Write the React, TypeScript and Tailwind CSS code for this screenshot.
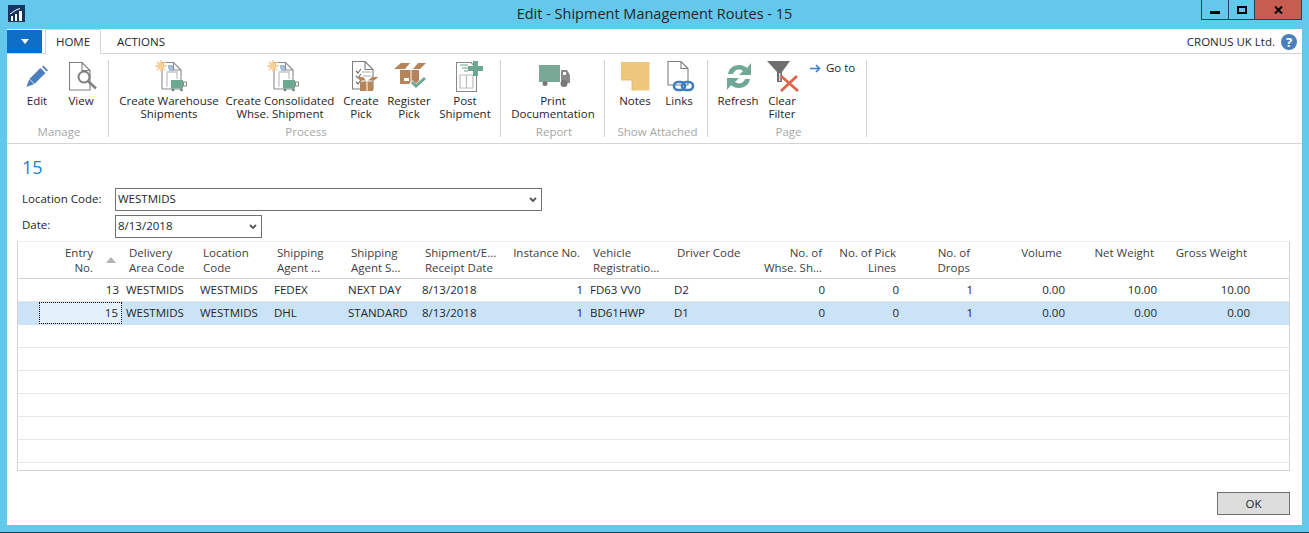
import React from "react";

// Ribbon icons
const Doc = () => (
  <path d="M0.500 0.500H13L21 8.500V28H0.500Z M13 0.500V8.500H21" fill="#fff" stroke="#7f7f7f" strokeWidth="1.100" />
);

const EditIcon = () => (
  <svg width="22" height="23" viewBox="0 0 26 26">
    <path d="M0.500 25.500L4 16L17 3L23 9L10 22Z" fill="#4a7fbb" />
    <path d="M19 1.500L20.500 0L26 5.500L24.500 7Z" fill="#4a7fbb" />
    <path d="M4 16L10 22" stroke="#fff" strokeWidth="1" />
  </svg>
);

const ViewIcon = () => (
  <svg width="28" height="29" viewBox="0 0 28 29">
    <Doc />
    <circle cx="15" cy="15" r="5.500" fill="#fff" stroke="#7f7f7f" strokeWidth="2" />
    <path d="M19 19L27 26.500" stroke="#7f7f7f" strokeWidth="2.500" />
  </svg>
);

const WarehouseIcon = () => (
  <svg width="32" height="32" viewBox="0 0 32 32">
    <path d="M7 2.500V29H26V10L18.500 2.500Z" fill="#fff" stroke="#8a8a8a" strokeWidth="1.100" />
    <path d="M18.500 2.500V10H26" fill="none" stroke="#8a8a8a" strokeWidth="1.100" />
    <path d="M12 12V27M12 12H22V19" fill="none" stroke="#c4c4c4" strokeWidth="1.300" />
    <path d="M13 6H18M13 8H18M14 10H18" stroke="#4a7fbb" strokeWidth="1" />
    <g stroke="#f5cf96" strokeWidth="1.500">
      <circle cx="6" cy="6" r="2.800" fill="#fbe6c2" />
      <path d="M6 0V12M0 6H12M1.800 1.800L10.200 10.200M10.200 1.800L1.800 10.200" />
    </g>
    <rect x="16" y="20" width="12" height="8.500" fill="#6ba88f" />
    <rect x="28.500" y="22" width="3" height="4" fill="none" stroke="#8a8a8a" />
    <circle cx="18" cy="30" r="1.300" fill="#777" />
    <circle cx="26.500" cy="30" r="1.300" fill="#777" />
  </svg>
);

const PickIcon = () => (
  <svg width="27" height="30" viewBox="0 0 27 30">
    <Doc />
    <path d="M4 10L6 12L9 8M4 15L6 17L9 13M4 21L6 23L9 19" fill="none" stroke="#666" strokeWidth="1.100" />
    <path d="M10 11H19M11 15H19" stroke="#aaa" strokeWidth="1" />
    <path d="M8 19.500H14L11 16H5ZM16 19.500H22L26.500 16H20Z" fill="#b5845a" />
    <rect x="8" y="20.500" width="13" height="9.500" fill="#b5845a" />
    <path d="M15 20.500V30" stroke="#fff" strokeWidth="1" />
  </svg>
);

const RegisterIcon = () => (
  <svg width="33" height="26" viewBox="0 0 33 26">
    <path d="M0 6H11L16 0H7ZM19 6H26L32 0H24Z" fill="#b5845a" />
    <rect x="6" y="7" width="19" height="14" fill="#b5845a" />
    <path d="M17 7V21" stroke="#fff" strokeWidth="1" />
    <rect x="10" y="15" width="5" height="3" fill="#fff" />
    <path d="M17 19L22 24L32 14" fill="none" stroke="#fff" strokeWidth="5" />
    <path d="M18 19L22 23L31 15" fill="none" stroke="#6ba88f" strokeWidth="3" />
  </svg>
);

const PostIcon = () => (
  <svg width="27" height="31" viewBox="0 0 27 31">
    <path d="M0.500 1.500H15L20.500 7V30.500H0.500Z" fill="#fff" stroke="#8a8a8a" strokeWidth="1.100" />
    <path d="M4 14H17V27H4ZM10.500 14V27" fill="none" stroke="#bdbdbd" strokeWidth="1.200" />
    <path d="M4 4H12M6 7H12M8 10H12" stroke="#6ba88f" strokeWidth="1" />
    <path d="M17 0H22V5H27V10H22V15H17V10H12V5H17Z" fill="#6ba88f" />
  </svg>
);

const TruckIcon = () => (
  <svg width="32" height="22" viewBox="0 0 32 22">
    <rect x="0" y="0" width="21" height="17" fill="#7aa897" />
    <path d="M22 5H28L31 10V18H22Z" fill="#8a8a8a" />
    <rect x="24" y="7" width="3" height="3" fill="#fff" />
    <circle cx="6" cy="18.500" r="2.500" fill="#777" />
    <circle cx="25" cy="18.500" r="3.500" fill="#777" />
  </svg>
);

const NotesIcon = () => (
  <svg width="29" height="29" viewBox="0 0 29 29">
    <path d="M0 0H28.500V28.500H11L0 17.500Z" fill="#eec77d" />
    <path d="M0.500 18H11V28.500" fill="#fff" stroke="#d9b26a" strokeWidth="0.800" />
  </svg>
);

const LinksIcon = () => (
  <svg width="28" height="31" viewBox="0 0 28 31">
    <path d="M1 0.500H14L21 7.500V24H1V0.500Z M14 0.500V7.500H21" fill="#fff" stroke="#7f7f7f" strokeWidth="1.100" />
    <rect x="7" y="21" width="11" height="8" rx="4" fill="none" stroke="#3f7fc0" strokeWidth="2.600" />
    <rect x="15" y="21" width="11" height="8" rx="4" fill="none" stroke="#3f7fc0" strokeWidth="2.600" />
  </svg>
);

const RefreshIcon = () => (
  <svg width="28" height="29" viewBox="0 0 28 29">
    <path d="M3 12C4 6 9 3 14 3C18 3 21 5 22 6L26 1V13H14L18 9C14 6 9 8 8 12Z" fill="#70a898" />
    <path d="M25 17C24 23 19 26 14 26C10 26 7 24 6 23L2 28V16H14L10 20C14 23 19 21 20 17Z" fill="#70a898" />
  </svg>
);

const ClearFilterIcon = () => (
  <svg width="32" height="31" viewBox="0 0 32 31">
    <path d="M0 0H23L15 11V21H10V11Z" fill="#6f6f6f" />
    <path d="M12 12H13.500V20H12Z" fill="#d8d8d8" />
    <path d="M14 30L30 15M14 15L31 30" stroke="#e0644c" strokeWidth="2.800" />
  </svg>
);

const Chevron = () => (
  <svg width="8" height="6" viewBox="0 0 8 6" className="shrink-0">
    <path d="M1 1L4 4L7 1" fill="none" stroke="#555" strokeWidth="1.800" />
  </svg>
);

interface RibbonButtonProps {
  icon: React.ReactNode;
  lines: string[];
  width: string;
  iconShift?: string;
}

const RibbonButton: React.FC<RibbonButtonProps> = ({ icon, lines, width, iconShift = "" }) => (
  <div className={`${width} flex flex-col items-center`}>
    <div className={`h-[40px] shrink-0 pt-[4px] flex items-center justify-center ${iconShift}`}>{icon}</div>
    <div className="text-center leading-[13px] whitespace-nowrap">
      {lines.map((line) => (
        <div key={line}>{line}</div>
      ))}
    </div>
  </div>
);

interface RibbonGroupProps {
  label: string;
  width: string;
  children: React.ReactNode;
}

const RibbonGroup: React.FC<RibbonGroupProps> = ({ label, width, children }) => (
  <div className={`${width} flex flex-col h-[77px] mt-[6px] border-r border-[#d4d4d4]`}>
    <div className="flex shrink-0 h-[66px] pl-1 -mt-[6px]">{children}</div>
    <div className="mt-[5px] pl-[3px] text-center leading-[14px] whitespace-nowrap text-[#a6a6a6]">{label}</div>
  </div>
);

const gridCols =
  "grid grid-cols-[21px_83px_74px_74px_74px_74px_89px_79px_84px_79px_79px_74px_74px_92px_92px_93px_1fr]";

interface Column {
  lines: string[];
  right?: boolean;
}

const columns: Column[] = [
  { lines: ["Entry", "No."], right: true },
  { lines: ["Delivery", "Area Code"] },
  { lines: ["Location", "Code"] },
  { lines: ["Shipping", "Agent ..."] },
  { lines: ["Shipping", "Agent S..."] },
  { lines: ["Shipment/E...", "Receipt Date"] },
  { lines: ["Instance No."], right: true },
  { lines: ["Vehicle", "Registratio..."] },
  { lines: ["Driver Code"] },
  { lines: ["No. of", "Whse. Sh..."], right: true },
  { lines: ["No. of Pick", "Lines"], right: true },
  { lines: ["No. of", "Drops"], right: true },
  { lines: ["Volume"], right: true },
  { lines: ["Net Weight"], right: true },
  { lines: ["Gross Weight"], right: true },
];

const rows = [
  ["13", "WESTMIDS", "WESTMIDS", "FEDEX", "NEXT DAY", "8/13/2018", "1", "FD63 VV0", "D2", "0", "0", "1", "0.00", "10.00", "10.00"],
  ["15", "WESTMIDS", "WESTMIDS", "DHL", "STANDARD", "8/13/2018", "1", "BD61HWP", "D1", "0", "0", "1", "0.00", "0.00", "0.00"],
];

export default function App() {
  return (
    <div
      className="w-[1309px] h-[533px] overflow-hidden bg-[#63c8eb] border-b border-[#1f3f4f] text-[11.5px] text-[#262626] flex flex-col"
      style={{ fontFamily: '"Open Sans", "Noto Sans", sans-serif' }}
    >
      {/* title bar */}
      <div className="h-[29px] shrink-0 relative flex items-start">
        <div className="ml-[8px] mt-[5px] w-[17px] h-[17px] bg-[#12365f] flex items-end justify-center">
          <svg width="15" height="15" viewBox="0 0 15 15">
            <path d="M2 14V9H4V14ZM6 14V7H8V14ZM10 14V4H13V14Z" fill="#fff" />
            <path d="M1 7L7 3L11 1.500" fill="none" stroke="#fff" strokeWidth="1" />
          </svg>
        </div>
        <div className="absolute left-0 right-0 top-[4px] text-center text-[14.5px] leading-[20px]">
          Edit - Shipment Management Routes - 15
        </div>
        <div className="ml-auto mr-[7px] flex h-[20px] border-x border-b border-[#1f4658] relative">
          <div className="w-[27px] border-r border-[#1f4658] flex items-center justify-center">
            <div className="w-[10px] h-[3px] bg-black mt-[5px]" />
          </div>
          <div className="w-[26px] border-r border-[#1f4658] flex items-center justify-center">
            <div className="w-[10px] h-[8px] border-2 border-black" />
          </div>
          <div className="w-[46px] bg-[#c65d50] flex items-center justify-center">
            <svg width="9" height="8" viewBox="0 0 9 8">
              <path d="M1 0.500L8 7.500M8 0.500L1 7.500" stroke="#000" strokeWidth="2" />
            </svg>
          </div>
        </div>
      </div>

      {/* window body */}
      <div className="mx-[7px] h-[496px] bg-white flex flex-col">
        {/* tabs */}
        <div className="h-[25px] shrink-0 flex items-end border-b border-[#d4d4d4] pr-[5px]">
          <div className="w-[35px] h-[23px] bg-[#0f6fc6] flex items-center justify-center self-start mt-[1px]">
            <svg width="8" height="5" viewBox="0 0 8 5">
              <path d="M0 0H8L4 5Z" fill="#fff" />
            </svg>
          </div>
          <div className="ml-[3px] w-[56px] h-[25px] -mb-px bg-white border border-b-0 border-[#d4d4d4] flex items-center justify-center">
            HOME
          </div>
          <div className="ml-[16px] h-[23px] flex items-center">ACTIONS</div>
          <div className="ml-auto h-[23px] flex items-center gap-[6px]">
            <span>CRONUS UK Ltd.</span>
            <span className="w-[16px] h-[16px] rounded-full bg-[#4a7fbb] text-white text-[13px] leading-[16px] font-bold text-center">
              ?
            </span>
          </div>
        </div>

        {/* ribbon */}
        <div className="h-[90px] shrink-0 flex border-b border-[#d4d4d4]">
          <RibbonGroup label="Manage" width="w-[102px]">
            <div className="w-[4px]" />
            <RibbonButton width="w-[44px]" icon={<EditIcon />} lines={["Edit"]} />
            <RibbonButton width="w-[44px]" iconShift="pl-[4px]" icon={<ViewIcon />} lines={["View"]} />
          </RibbonGroup>
          <RibbonGroup label="Process" width="w-[392px]">
            <RibbonButton width="w-[112px]" iconShift="pl-[4px]" icon={<WarehouseIcon />} lines={["Create Warehouse", "Shipments"]} />
            <RibbonButton width="w-[110px]" iconShift="pl-[5px]" icon={<WarehouseIcon />} lines={["Create Consolidated", "Whse. Shipment"]} />
            <RibbonButton width="w-[52px]" iconShift="pl-[8px]" icon={<PickIcon />} lines={["Create", "Pick"]} />
            <RibbonButton width="w-[44px]" iconShift="pl-[2px]" icon={<RegisterIcon />} lines={["Register", "Pick"]} />
            <RibbonButton width="w-[68px]" iconShift="pl-[8px]" icon={<PostIcon />} lines={["Post", "Shipment"]} />
          </RibbonGroup>
          <RibbonGroup label="Report" width="w-[104px]">
            <RibbonButton width="w-[96px]" iconShift="pl-[4px]" icon={<TruckIcon />} lines={["Print", "Documentation"]} />
          </RibbonGroup>
          <RibbonGroup label="Show Attached" width="w-[103px]">
            <RibbonButton width="w-[52px]" icon={<NotesIcon />} lines={["Notes"]} />
            <RibbonButton width="w-[36px]" iconShift="pl-[4px]" icon={<LinksIcon />} lines={["Links"]} />
          </RibbonGroup>
          <RibbonGroup label="Page" width="w-[159px]">
            <RibbonButton width="w-[52px]" iconShift="pl-[2px]" icon={<RefreshIcon />} lines={["Refresh"]} />
            <RibbonButton width="w-[36px]" iconShift="pl-[2px]" icon={<ClearFilterIcon />} lines={["Clear", "Filter"]} />
            <div className="ml-[10px] mt-[7px] flex items-start gap-[5px] leading-[14px]">
              <svg width="11" height="9" viewBox="0 0 11 9" className="mt-[3px]">
                <path d="M0 4.500H9M6 1L9.500 4.500L6 8" fill="none" stroke="#3f7fc0" strokeWidth="1.600" />
              </svg>
              <span>Go to</span>
            </div>
          </RibbonGroup>
        </div>

        {/* form */}
        <div className="px-[15px] pt-[12px] text-[18px] leading-[22px] text-[#1e80c8]">15</div>
        <div className="flex items-center mt-[10px] pl-[15px]">
          <label className="w-[93px] -mt-[1px]">Location Code:</label>
          <div className="w-[427px] h-[23px] border border-[#707070] pl-[2px] pr-[4px] flex items-center justify-between">
            <span className="-mt-[2px]">WESTMIDS</span>
            <Chevron />
          </div>
        </div>
        <div className="flex items-center mt-[4px] pl-[15px]">
          <label className="w-[93px] -mt-[3px]">Date:</label>
          <div className="w-[147px] h-[23px] border border-[#707070] pl-[2px] pr-[4px] flex items-center justify-between">
            <span className="-mt-[2px]">8/13/2018</span>
            <Chevron />
          </div>
        </div>

        {/* routes table */}
        <div className="ml-[10px] mt-[3px] w-[1273px] h-[230px] border border-[#d4d4d4] border-t-[#eeeeee] overflow-hidden">
          <div className={`${gridCols} h-[37px] border-b border-[#d4d4d4] pt-[3px] leading-[15px] text-[#404040]`}>
            <div />
            {columns.map((col, i) => (
              <div
                key={col.lines.join()}
                className={`relative whitespace-nowrap ${col.right ? "text-right pr-[6px]" : "text-left pl-[7px]"} ${i === 0 ? "pr-[29px]" : ""}`}
              >
                {col.lines.map((line) => (
                  <div key={line}>{line}</div>
                ))}
                {i === 0 && (
                  <svg width="10" height="6" viewBox="0 0 10 6" className="absolute right-[6px] top-[12px]">
                    <path d="M0 6L5 0L10 6Z" fill="#b5b5b5" />
                  </svg>
                )}
              </div>
            ))}
          </div>
          {rows.map((row, r) => (
            <div
              key={row[0]}
              className={`${gridCols} h-[23px] border-b leading-[21px] ${r === 1 ? "bg-[#cae3f6] border-[#cae3f6]" : "border-[#e6e6e6]"}`}
            >
              <div />
              {row.map((cell, i) => (
                <div
                  key={i}
                  className={`whitespace-nowrap ${columns[i].right ? "text-right pr-[3px]" : "text-left pl-[4px]"} ${
                    r === 1 && i === 0 ? "bg-[#e3f0fa] border border-dotted border-black leading-[19px]" : ""
                  }`}
                >
                  {cell}
                </div>
              ))}
            </div>
          ))}
          {[0, 1, 2, 3, 4, 5].map((n) => (
            <div key={n} className="h-[23px] border-b border-[#e6e6e6]" />
          ))}
        </div>

        {/* footer */}
        <div className="flex justify-end pr-[12px] mt-[21px]">
          <button className="w-[73px] h-[23px] bg-[#dddddd] border border-[#707070] text-[#262626]">OK</button>
        </div>
      </div>
    </div>
  );
}
